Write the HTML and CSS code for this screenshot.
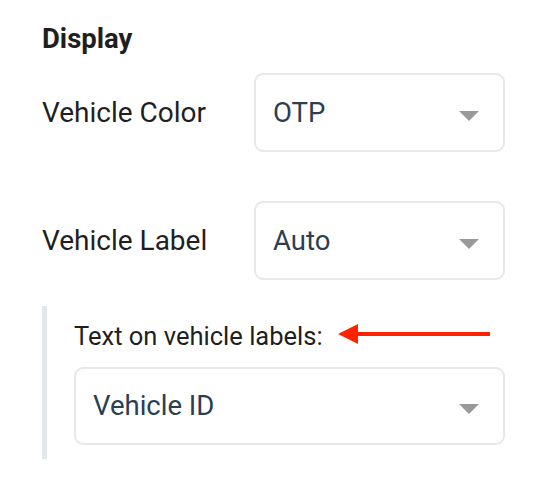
FILE: index.html
```html
<!DOCTYPE html>
<html>
<head>
<meta charset="utf-8">
<link rel="stylesheet" href="styles.css">
</head>
<body>
<div class="panel">
  <h2 class="title">Display</h2>
  <div class="row">
    <div class="label">Vehicle Color</div>
    <div class="select"><span class="value">OTP</span><span class="caret"></span></div>
  </div>
  <div class="row row2">
    <div class="label">Vehicle Label</div>
    <div class="select"><span class="value">Auto</span><span class="caret"></span></div>
  </div>
  <div class="sub">
    <div class="sublabel">Text on vehicle labels:</div>
    <div class="select wide"><span class="value">Vehicle ID</span><span class="caret"></span></div>
    <svg class="arrow" width="154" height="22" viewBox="0 0 154 22">
      <rect x="18" y="8" width="134" height="4" fill="#ff2200"/>
      <polygon points="0,10 20,0 20,20" fill="#ff2200"/>
    </svg>
  </div>
</div>
</body>
</html>
```
FILE: styles.css
```css
html, body {
  margin: 0;
  padding: 0;
  background: #ffffff;
}
body {
  font-family: Roboto, "Liberation Sans", sans-serif;
  color: #1f1f1f;
}
.panel {
  padding: 23px 43px 0 42px;
}
.title {
  margin: 0;
  font-size: 27.5px;
  line-height: 32px;
  font-weight: 700;
  color: #1f1f1f;
}
.row {
  display: flex;
  align-items: center;
  margin-top: 18px;
}
.row2 {
  margin-top: 49px;
}
.label {
  width: 212px;
  font-size: 28px;
  line-height: 34px;
}
.select {
  box-sizing: border-box;
  width: 251px;
  height: 79px;
  border: 2px solid #e8e8e8;
  border-radius: 9px;
  display: flex;
  align-items: center;
  justify-content: space-between;
  padding: 0 24px 0 17px;
  background: #fff;
}
.value {
  font-size: 27.5px;
  line-height: 32px;
  color: #2c3e50;
}
.caret {
  width: 0;
  height: 0;
  border-left: 10.5px solid transparent;
  border-right: 10.5px solid transparent;
  border-top: 10px solid #999999;
  margin-top: 6px;
}
.sub {
  position: relative;
  margin-top: 26px;
  border-left: 5px solid #e3e6ea;
  padding: 16px 0 14px 27px;
}
.sublabel {
  font-size: 25.5px;
  line-height: 28px;
  color: #1f1f1f;
  margin-bottom: 17px;
}
.wide {
  width: 431px;
  height: 78px;
}
.arrow {
  position: absolute;
  left: 291px;
  top: 18px;
}
```
